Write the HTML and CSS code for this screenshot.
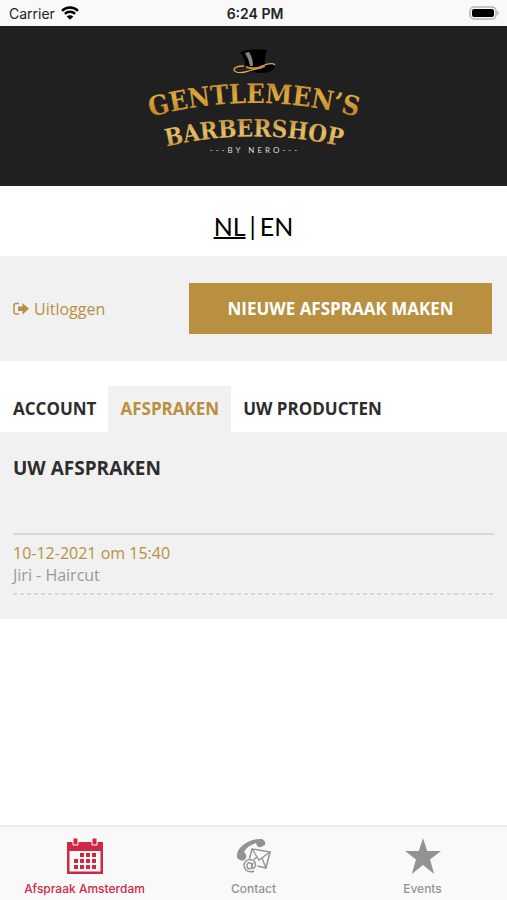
FILE: index.html
```
<!DOCTYPE html>
<html lang="nl">
<head>
    <meta charset="UTF-8">
    <meta name="viewport" content="width=device-width, initial-scale=1.0">
    <title>Gentlemen's Barbershop</title>
    <link rel="stylesheet" href="styles.css">
</head>
<body>

<!-- Status bar -->
<div class="status-bar">
    <div class="carrier">
        <span>Carrier</span>
        <svg class="wifi" viewBox="0 0 18 14" aria-hidden="true">
            <path d="M1 4.8a11.5 11.5 0 0 1 16 0M3.9 7.9a7.3 7.3 0 0 1 10.200 0" fill="none" stroke="#000" stroke-width="2.5"/>
            <path d="M9 13.8L5.7 10.500a4.7 4.7 0 0 1 6.6 0z" fill="#000"/>
        </svg>
    </div>
    <span class="clock">6:24 PM</span>
    <svg class="battery" viewBox="0 0 32 14" aria-hidden="true">
        <rect x="1" y="1" width="26" height="12" rx="4" fill="#f8f8f8" stroke="#b4b4b4" stroke-width="1.5"/>
        <rect x="3" y="3" width="22" height="8" rx="2" fill="#000"/>
        <path d="M28.5 4.500q2.5 2.5 0 5z" fill="#a8a8a8"/>
    </svg>
</div>

<!-- Logo -->
<header class="header">
    <svg class="logo" viewBox="0 0 220 112" role="img" aria-label="Gentlemen's Barbershop by Nero">
        <defs>
            <linearGradient id="gold" x1="0" y1="0" x2="0" y2="1">
                <stop offset="0" stop-color="#b97c26"/>
                <stop offset="0.4" stop-color="#dfa940"/>
                <stop offset="1" stop-color="#b97518"/>
            </linearGradient>
            <linearGradient id="goldLight" x1="0" y1="0" x2="0" y2="1">
                <stop offset="0" stop-color="#b57d2a"/>
                <stop offset="0.5" stop-color="#e6c06a"/>
                <stop offset="1" stop-color="#bd8128"/>
            </linearGradient>
            <path id="arcTop" d="M6 71Q110 43 214 71"/>
            <path id="arcBottom" d="M16 102Q110 79 204 102"/>
        </defs>
        <path d="M96 6Q110 2 123 4Q120 12 121 20Q112 25 102 21Q101 13 96 6z" fill="#000"/>
        <path d="M101 7Q105 13 106 20L109 20Q109 12 105 6z" fill="#858585"/>
        <path d="M91 25Q100 29 110 25Q119 20 124 18Q130 16 131 20Q130 26 119 27Q112 27 107 25Q99 29 91 27z" fill="#000"/>
        <path d="M102 20Q112 23 121 19L121 21Q112 26 102 22z" fill="#bd8a35"/>
        <path d="M100 20Q90 20 90 24Q92 28 101 26Q110 24 118 20Q128 16 131 19" fill="none" stroke="#dba84a" stroke-width="1.3"/>
        <text class="logo-text logo-top" fill="url(#gold)"><textPath href="#arcTop" startOffset="50%">GENTLEMEN’S</textPath></text>
        <text class="logo-text logo-bottom" fill="url(#goldLight)"><textPath href="#arcBottom" startOffset="50%">BARBERSHOP</textPath></text>
        <text class="logo-sub" x="111" y="107">---BY NERO---</text>
    </svg>
</header>

<main>
    <nav class="languages">
        <a class="active" href="#nl">NL</a>
        <span>|</span>
        <a href="#en">EN</a>
    </nav>

    <div class="actions">
        <a class="logout" href="#logout">
            <svg viewBox="0 0 16 14" aria-hidden="true">
                <path d="M6 1.500H3Q1 1.500 1 3.500v6.500q0 2 2 2h3" fill="none" stroke="currentColor" stroke-width="1.5"/>
                <path d="M5 4.500h4.500V1L16 6.800L9.500 12.500V9H5z" fill="currentColor"/>
            </svg>
            Uitloggen
        </a>
        <button class="new-appointment" type="button">NIEUWE AFSPRAAK MAKEN</button>
    </div>

    <nav class="tabs">
        <a href="#account">ACCOUNT</a>
        <a class="active" href="#afspraken">AFSPRAKEN</a>
        <a href="#producten">UW PRODUCTEN</a>
    </nav>

    <section class="appointments">
        <h2>UW AFSPRAKEN</h2>
        <ul>
            <li>
                <span class="date">10-12-2021 om 15:40</span>
                <span class="treatment">Jiri - Haircut</span>
                <svg class="dashes" aria-hidden="true"><line x1="0" y1="1" x2="100%" y2="1"/></svg>
            </li>
        </ul>
    </section>
</main>

<!-- Bottom navigation -->
<nav class="bottom-nav">
    <a class="active" href="#afspraak">
        <svg viewBox="0 0 36 36" aria-hidden="true">
            <path d="M0 4h36v32H0z" fill="currentColor"/>
            <path d="M2.500 13h31v20.500h-31z" fill="#f9f9f9"/>
            <path d="M6 0h5v7H6zM25 0h5v7h-5z" fill="currentColor" stroke="#f9f9f9"/>
            <path d="M13 15h4v4h-4zM19 15h4v4h-4zM25 15h4v4h-4zM7 21h4v4H7zM13 21h4v4h-4zM19 21h4v4h-4zM25 21h4v4h-4zM7 27h4v4H7zM13 27h4v4h-4zM19 27h4v4h-4zM25 27h4v4h-4z" fill="currentColor"/>
        </svg>
        <span>Afspraak Amsterdam</span>
    </a>
    <a href="#contact">
        <svg viewBox="0 0 36 36" aria-hidden="true">
            <path d="M1 19Q0 13 7 7Q16 0 26 1Q30 3 29 7L25 9Q21 10 20 5Q11 8 8 14Q11 16 10 20Q8 24 4 22Q1 21 1 19z" fill="currentColor"/>
            <path d="M16 11L34 14L30 30L12 26z" fill="#f9f9f9" stroke="currentColor" stroke-width="1.5"/>
            <path d="M16 11L23 22L34 14M12 26L21 19M30 30L26 20" fill="none" stroke="currentColor" stroke-width="1.3"/>
            <circle cx="14" cy="28" r="7.5" fill="#f9f9f9"/>
            <path d="M18 33Q14 35 10 32Q6 27 10 23Q14 20 18 23Q21 27 18 30Q16 31 16 28L17 25" fill="none" stroke="currentColor" stroke-width="1.4"/>
            <ellipse cx="13.5" cy="27.7" rx="2.5" ry="3" fill="none" stroke="currentColor" stroke-width="1.4"/>
        </svg>
        <span>Contact</span>
    </a>
    <a href="#events">
        <svg viewBox="0 0 36 36" aria-hidden="true">
            <path d="M18 0L22.200 13H36L25 21.500L29.200 36L18 27L6.800 36L11 21.500L0 13H13.800z" fill="currentColor"/>
        </svg>
        <span>Events</span>
    </a>
</nav>

</body>
</html>
```

FILE: styles.css
```
* {
    box-sizing: border-box;
}

body {
    display: flex;
    flex-direction: column;
    min-height: 100vh;
    margin: 0;
    background-color: #fff;
    color: #2d2d2d;
    font-family: "Open Sans", sans-serif;
    font-size: 16px;
}

a {
    color: inherit;
    text-decoration: none;
}

svg {
    display: block;
}

/* Status bar */
.status-bar {
    display: grid;
    grid-template-columns: 1fr auto 1fr;
    align-items: center;
    height: 26px;
    padding: 0 6px 0 9px;
    background-color: #f9f9f9;
    color: #222;
    font-family: Inter, sans-serif;
    font-size: 14px;
}

.carrier {
    display: flex;
    align-items: center;
    gap: 6px;
}

.wifi {
    width: 18px;
    height: 14px;
}

.clock {
    font-weight: 600;
}

.battery {
    width: 32px;
    height: 14px;
    justify-self: end;
}

/* Logo */
.header {
    display: flex;
    justify-content: center;
    padding: 20px 0 28px;
    background-color: #202020;
}

.logo {
    width: 220px;
    height: 112px;
}

.logo-text {
    font-family: "DejaVu Serif Condensed", "DejaVu Serif", serif;
    font-weight: bold;
    text-anchor: middle;
}

.logo-top {
    font-size: 27px;
}

.logo-bottom {
    font-size: 24px;
}

.logo-sub {
    fill: #ddd;
    font-family: Lato, sans-serif;
    font-size: 8px;
    letter-spacing: 3px;
    text-anchor: middle;
}

/* Content */
main {
    flex: 1;
}

.languages {
    display: flex;
    justify-content: center;
    gap: 4px;
    padding: 22px 0 12px;
    color: #000;
    font-family: Lato, sans-serif;
    font-size: 25px;
    line-height: 36px;
}

.languages .active {
    text-decoration: underline;
    text-decoration-thickness: 2px;
}

.actions {
    display: flex;
    align-items: center;
    justify-content: space-between;
    padding: 27px 15px 27px 13px;
    background-color: #f1f1f1;
}

.logout {
    display: flex;
    align-items: center;
    gap: 5px;
    color: #b89040;
}

.logout svg {
    width: 16px;
    height: 14px;
}

.new-appointment {
    width: 303px;
    height: 51px;
    padding: 0;
    border: none;
    background-color: #b89040;
    color: #fff;
    font-family: inherit;
    font-size: 17px;
    font-weight: bold;
    cursor: pointer;
}

.tabs {
    display: flex;
    padding: 25px 1px 0;
    font-size: 17px;
    font-weight: bold;
    line-height: 46px;
}

.tabs a {
    padding: 0 12px;
}

.tabs .active {
    background-color: #f1f1f1;
    color: #b89040;
}

.appointments {
    padding: 22px 13px 24px;
    background-color: #f1f1f1;
}

.appointments h2 {
    margin: 0 0 50px;
    font-size: 19px;
    line-height: 29px;
}

.appointments ul {
    margin: 0;
    padding: 7px 0 0;
    border-top: 2px solid #d8d8d8;
    list-style: none;
}

.appointments li span {
    display: block;
    line-height: 22px;
}

.date {
    color: #b89040;
}

.treatment {
    color: #999;
}

.dashes {
    width: 100%;
    height: 2px;
    margin-top: 7px;
}

.dashes line {
    stroke: #d8d8d8;
    stroke-width: 2px;
    stroke-dasharray: 4 3;
}

/* Bottom navigation */
.bottom-nav {
    display: grid;
    grid-template-columns: repeat(3, 1fr);
    padding: 11px 0 2px;
    border-top: 2px solid #ececec;
    background-color: #f9f9f9;
    color: #939393;
    font-family: Inter, sans-serif;
    font-size: 12px;
    font-weight: 500;
    line-height: 18px;
}

.bottom-nav a {
    display: flex;
    flex-direction: column;
    align-items: center;
    gap: 6px;
}

.bottom-nav svg {
    width: 36px;
    height: 36px;
}

.bottom-nav .active {
    color: #cf2845;
}
```
